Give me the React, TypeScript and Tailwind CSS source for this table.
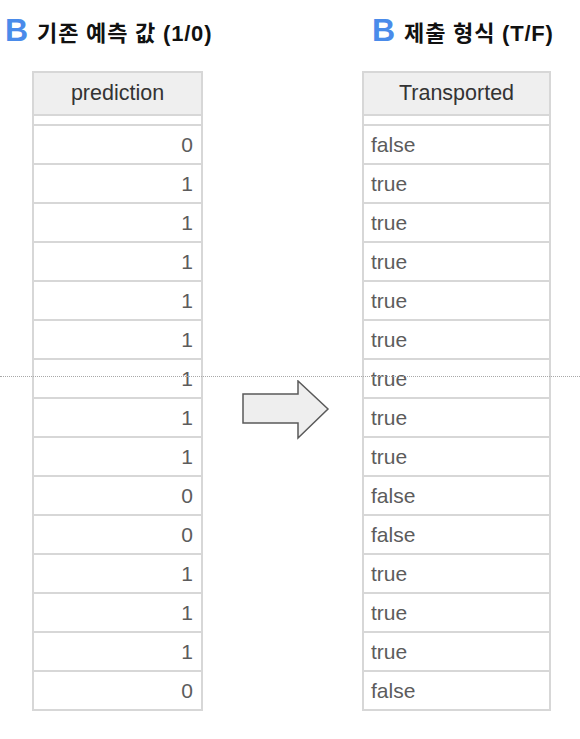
import React from "react";

const left = ["0", "1", "1", "1", "1", "1", "1", "1", "1", "0", "0", "1", "1", "1", "0"];
const right = left.map((v) => (v === "1" ? "true" : "false"));

const font = { fontFamily: '"Liberation Sans", Arial, "Noto Sans CJK KR", sans-serif' };

function Title({ text }: { text: string }) {
  return (
    <div className="flex items-baseline h-[52px] pt-[15px] whitespace-nowrap" style={font}>
      <span className="text-[32px] leading-[31px] font-bold text-[#4a8bea]">B</span>
      <span className="ml-[9px] text-[22px] leading-[31px] font-bold text-[#111] tracking-[0.8px]">{text}</span>
    </div>
  );
}

export default function App() {
  return (
    <div className="relative w-[580px] h-[739px] bg-white overflow-hidden" style={font}>
      <div className="flex items-start">
        {/* Left column */}
        <div className="ml-[5px] w-[198px] flex flex-col">
          <Title text="기존 예측 값 (1/0)" />
          <div className="mt-[19px] ml-[27px] w-[171px] border-x-2 border-t-2 border-[#d7d7d7]">
            <div className="h-[43px] bg-[#efefef] border-b-2 border-[#d7d7d7] flex items-center justify-center text-[21.5px] text-[#333]">
              prediction
            </div>
            <div className="h-[10px] border-b-2 border-[#d7d7d7]" />
            {left.map((v, i) => (
              <div
                key={i}
                className="h-[39px] border-b-2 border-[#d7d7d7] flex items-center justify-end pr-[8px] text-[21px] text-[#5c5c5c]"
              >
                {v}
              </div>
            ))}
          </div>
        </div>

        {/* Arrow */}
        <div className="ml-[39px] mt-[380px] w-[88px] h-[60px]">
          <svg width="88" height="60" viewBox="0 0 88 60">
            <path
              d="M1 14 L56 14 L56 1 L86 29 L56 58 L56 43 L1 43 Z"
              fill="#eeeeee"
              stroke="#5a5a5a"
              strokeWidth="1.5"
              strokeLinejoin="miter"
            />
          </svg>
        </div>

        {/* Right column */}
        <div className="ml-[32px] flex flex-col">
          <div className="ml-[10px]">
            <Title text="제출 형식 (T/F)" />
          </div>
          <div className="mt-[19px] w-[189px] border-x-2 border-t-2 border-[#d7d7d7]">
            <div className="h-[43px] bg-[#efefef] border-b-2 border-[#d7d7d7] flex items-center justify-center text-[21.5px] text-[#333]">
              Transported
            </div>
            <div className="h-[10px] border-b-2 border-[#d7d7d7]" />
            {right.map((v, i) => (
              <div
                key={i}
                className="h-[39px] border-b-2 border-[#d7d7d7] flex items-center pl-[7px] text-[21px] text-[#5c5c5c]"
              >
                {v}
              </div>
            ))}
          </div>
        </div>
      </div>

      {/* dotted guide line */}
      <div className="absolute left-0 right-0 top-[376px] border-t border-dotted border-[#a8a8a8]" />
    </div>
  );
}
